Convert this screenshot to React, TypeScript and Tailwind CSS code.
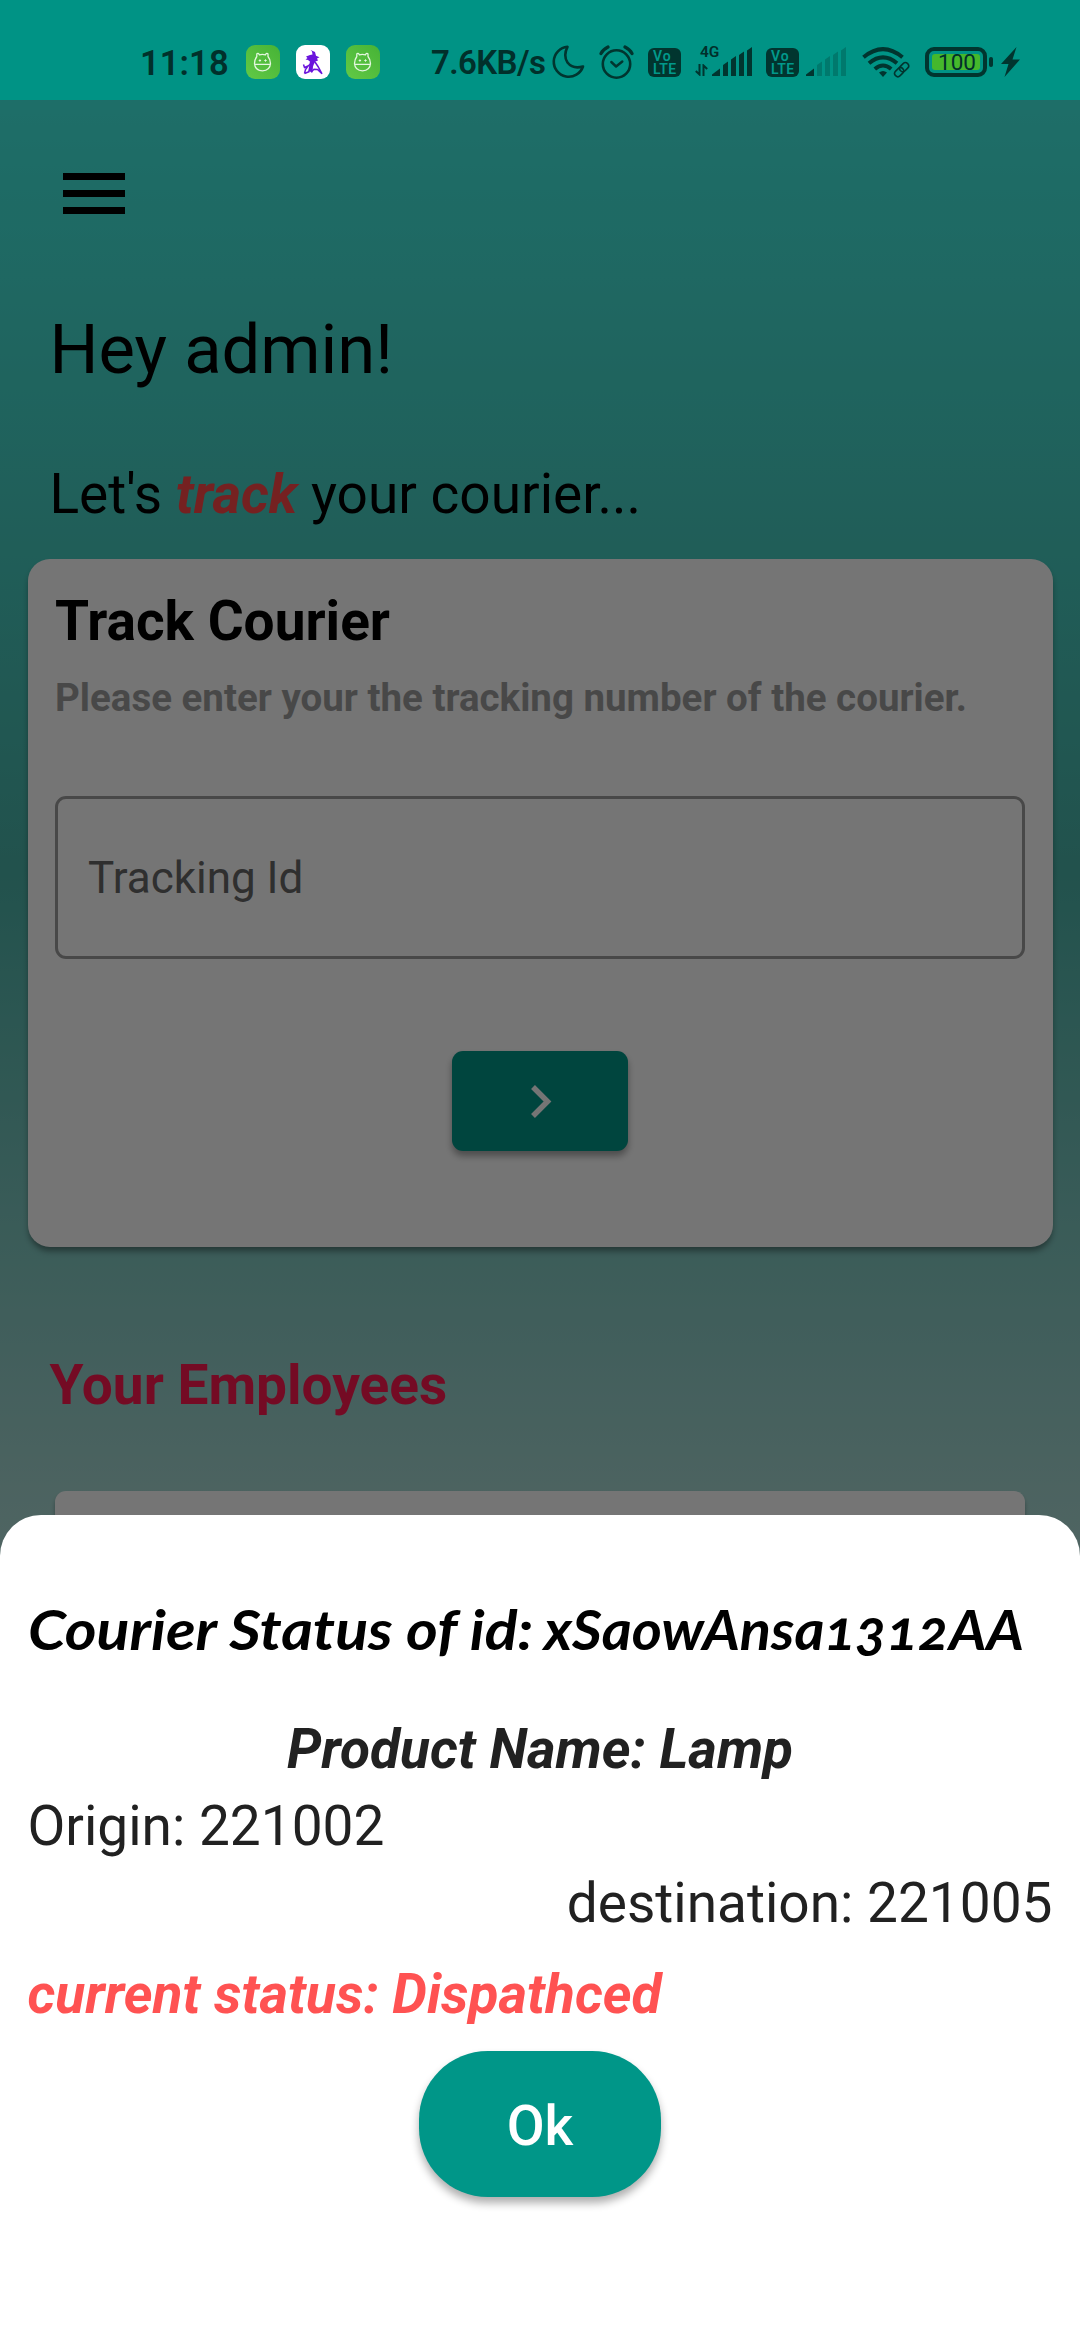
function AndroidBadge() {
  return (
    <svg viewBox="0 0 34 34" className="h-[34px] w-[34px]">
      <defs>
        <linearGradient id="leaf" x1="0" y1="1" x2="1" y2="0">
          <stop offset="0" stopColor="#62c946" />
          <stop offset="1" stopColor="#46b336" />
        </linearGradient>
      </defs>
      <rect width="34" height="34" rx="9" fill="url(#leaf)" />
      <g fill="none" stroke="#e4f7df" strokeWidth="1.3" strokeLinecap="round" strokeLinejoin="round">
        <path d="M8.500 19.300h16M10.800 11.500V9q1.200-1.500 2.600.8 3-.7 6 0 1.400-2.300 2.600-.8v2.500q2.500 3 2.500 7-.5 7-8 7.300-7.500-.3-8-7.300 0-4 2.300-7z" />
      </g>
      <path d="M12.700 15.500h2.400M13.900 14.300v2.400M18.300 15.500h2.400M19.500 14.300v2.400" stroke="#e4f7df" strokeWidth="1" />
    </svg>
  );
}

function FigureBadge() {
  return (
    <svg viewBox="0 0 34 34" className="h-[34px] w-[34px]">
      <rect width="34" height="34" rx="9" fill="#fff" />
      <g fill="#6a14dc">
        <path d="M14.500 5l4.500 2 1 3.800 3.500 1.400-2.500 1.300 1 2-2.500 1-1.500 2-3.500-1.500-2.500-2-2.500-.5 2-1.500-1.500-1.500 4-1.500 2.500-.5-.5-3z" />
        <path d="M14 16l4.500 1.500-1.500 4-.500 6-2.500-1-2 .5 1-5z" />
      </g>
      <path
        d="M19 17l3 4.500 4 7.300-4.500-4.300-3.500-.3-3 3M8.500 28.500l1-4 2.500-3.500M8.500 28.500l5-2M7.500 19.500l1 3 3.500-1.500 2.500-2"
        fill="none"
        stroke="#6a14dc"
        strokeWidth="1.500"
      />
    </svg>
  );
}

function Moon() {
  return (
    <svg viewBox="0 0 34 34" className="h-[34px] w-[34px]" fill="none" stroke="#01352f" strokeWidth="2.6" strokeLinejoin="round">
      <path d="M16.500 1.800A15 15 0 1 0 32 21.500Q22 24.500 16.500 17.500 12 10.500 16.500 1.800z" />
    </svg>
  );
}

function Alarm() {
  return (
    <svg viewBox="0 0 35 35" className="h-[35px] w-[35px]" fill="none" stroke="#01352f" strokeLinecap="round" strokeLinejoin="round">
      <circle cx="17.500" cy="19" r="13.700" strokeWidth="2.600" />
      <path d="M12.300 17l4.800 4.500 6.200-5" strokeWidth="2.400" />
      <path d="M2 8.500Q4 4.500 9 2M33 8.500Q31 4.500 26 2" strokeWidth="3.200" />
    </svg>
  );
}

function Volte() {
  return (
    <div className="flex h-[29px] w-[33px] flex-col rounded-[6px] bg-[#01352f] pt-[2px] pl-[5px] font-semibold text-[#01998b]">
      <span className="h-[13px] text-[14px] leading-[13px] tracking-[1px]">Vo</span>
      <span className="h-[12px] text-[14px] leading-[13px] tracking-[0.3px]">LTE</span>
    </div>
  );
}

function Signal({ dim }: { dim?: boolean }) {
  return (
    <svg viewBox="0 0 40 30" className="h-[30px] w-[40px]" fill="#01352f">
      <path d="M0 29v-1.500l8-6V29z" />
      <g opacity={dim ? 0.28 : 1}>
        <path d="M11 29V18l5-3.500V29zM19 29V12.500l5-3.500V29zM27 29V8l5-3.500V29zM35 29V3.500L40 0V29z" />
      </g>
    </svg>
  );
}

function Wifi() {
  return (
    <svg viewBox="0 0 48 31" className="h-[31px] w-[48px]" fill="none" stroke="#01352f">
      <path d="M1.500 10.300Q21 -6 40.500 10.300M7 16.300Q21 4.500 35 16.300M12.800 22Q21 15 29.200 22" strokeWidth="4" />
      <path d="M21 30l-4-4.500q4-3 8 0z" fill="#01352f" stroke="none" />
      <g strokeWidth="1.600" transform="rotate(-45 39.500 22.500)">
        <rect x="31" y="19.500" width="10" height="6.400" rx="3.200" />
        <rect x="38" y="19.500" width="10" height="6.400" rx="3.200" />
      </g>
    </svg>
  );
}

function StatusBar() {
  return (
    <div className="flex h-[100px] items-start bg-[#009385] pl-[140px] text-[#01302b]">
      <span className="mt-[42px] w-[106px] text-[34.500px] leading-[42px] font-semibold tracking-[0.1px]">11:18</span>
      <div className="mt-[45px] flex gap-[16px]">
        <AndroidBadge />
        <FigureBadge />
        <AndroidBadge />
      </div>
      <span className="mt-[42px] ml-[51px] w-[120px] text-[33px] leading-[42px] font-semibold tracking-[-0.6px] whitespace-nowrap">
        7.6KB/s
      </span>
      <div className="mt-[45px]"><Moon /></div>
      <div className="mt-[45px] ml-[14px]"><Alarm /></div>
      <div className="mt-[48px] ml-[14px]"><Volte /></div>
      <div className="mt-[43px] ml-[14px] w-[17px]">
        <span className="block pl-[5px] text-[15.500px] leading-[18px] font-semibold">4G</span>
        <svg viewBox="0 0 13 12" className="mt-[3px] h-[12px] w-[13px]" fill="none" stroke="#01352f" strokeWidth="2">
          <path d="M4.500 0v10.500L.8 7M8.500 12V1.500L12.200 5" />
        </svg>
      </div>
      <div className="mt-[47px]"><Signal /></div>
      <div className="mt-[48px] ml-[14px]"><Volte /></div>
      <div className="mt-[47px] ml-[7px]"><Signal dim /></div>
      <div className="mt-[47px] ml-[16px]"><Wifi /></div>
      <div className="mt-[47px] ml-[15px] h-[30px] w-[62px] rounded-[9px] border-4 border-[#01352f] p-[3px]">
        <div className="flex h-[16px] items-center justify-center rounded-[3px] bg-[#45b82c] pl-[2px] text-[22.500px] leading-[16px]">
          100
        </div>
      </div>
      <div className="mt-[57px] ml-[2px] h-[10px] w-[4px] rounded-[2px] bg-[#01352f]" />
      <svg viewBox="0 0 19 30" className="mt-[47px] ml-[8px] h-[30px] w-[19px]" fill="#01352f">
        <path d="M15.500 0L0 17h7.500L3.500 30 19 12.500h-7.500z" />
      </svg>
    </div>
  );
}

function HomePage() {
  return (
    <div className="relative h-[2240px] overflow-hidden bg-[linear-gradient(180deg,#42f0e3_0px,#4ab3a8_770px,#a7d8d3_1400px,#ffffff_2240px)] text-black">
      <div className="flex flex-col px-[49.500px] pt-[73px]">
        <button className="ml-[13.500px] flex w-[62px] flex-col gap-[10px]">
          <span className="h-[7px] w-full bg-black" />
          <span className="h-[7px] w-full bg-black" />
          <span className="h-[7px] w-full bg-black" />
        </button>
        <h1 className="mt-[96px] text-[68.750px] leading-[80px]">Hey admin!</h1>
        <p className="mt-[72px] text-[55px] leading-[64px]">
          Let's <span className="font-bold text-[#ff4848] italic">track</span> your courier...
        </p>
      </div>
      <div className="mx-[27.500px] mt-[33px] flex h-[688px] flex-col rounded-[22px] bg-white px-[27.500px] pt-[30px] shadow-[0_5px_6px_-1px_rgba(0,0,0,0.4)]">
        <h2 className="text-[55px] leading-[64px] font-bold">Track Courier</h2>
        <p className="mt-[22px] text-[38.500px] leading-[46px] font-bold whitespace-nowrap text-[#9e9e9e]">
          Please enter your the tracking number of the courier.
        </p>
        <div className="mt-[75px] flex h-[162.500px] items-center rounded-[11px] border-[3px] border-[#9e9e9e] pt-[2px] pl-[30px] text-[44px] text-[#666666]">
          Tracking Id
        </div>
        <button className="mt-[92.500px] flex h-[99.500px] w-[176px] items-center justify-center self-center rounded-[11px] bg-[#009688] pt-[2px] pl-[2px] shadow-[0_5px_7px_rgba(0,0,0,0.35)]">
          <svg viewBox="0 0 21 33" className="h-[33px] w-[21px]" fill="none" stroke="#fff" strokeWidth="5.500">
            <path d="M2 2l14.500 14.500L2 31" />
          </svg>
        </button>
      </div>
      <h2 className="mt-[106px] ml-[49.500px] text-[55px] leading-[64px] font-bold text-[#fc1a50]">Your Employees</h2>
      <div className="mx-[55px] mt-[74px] h-[600px] rounded-[11px] bg-white shadow-[0_4px_4px_rgba(0,0,0,0.3)]" />
      <div className="absolute inset-0 bg-black/54" />
    </div>
  );
}

function StatusSheet() {
  return (
    <div className="absolute inset-x-0 bottom-0 flex h-[825px] flex-col rounded-t-[41px] bg-white px-[27.500px] pt-[82px] text-[55px] leading-[64px] text-[#212121]">
      <h2 className="flex font-[Lato] font-bold whitespace-nowrap text-black italic [font-feature-settings:'onum']">
        <span className="w-[516px] origin-left scale-x-[1.107]">Courier Status of id:</span>
        <span className="origin-left scale-x-[1.048]">xSaowAnsa1312AA</span>
      </h2>
      <p className="mt-[56px] text-center font-bold italic">Product Name: Lamp</p>
      <p className="mt-[13px]">Origin: 221002</p>
      <p className="mt-[13px] text-right">destination: 221005</p>
      <p className="mt-[27px] font-bold text-[#ff5252] italic">current status: Dispathced</p>
      <button className="mt-[25px] flex h-[146px] w-[242px] items-center justify-center self-center rounded-[68.750px] bg-[#009688] pt-[3px] font-medium text-white shadow-[0_6px_8px_rgba(0,0,0,0.32)]">
        Ok
      </button>
    </div>
  );
}

export default function App() {
  return (
    <div className="relative h-[2340px] w-[1080px] overflow-hidden font-[Roboto,sans-serif]">
      <StatusBar />
      <HomePage />
      <StatusSheet />
    </div>
  );
}
